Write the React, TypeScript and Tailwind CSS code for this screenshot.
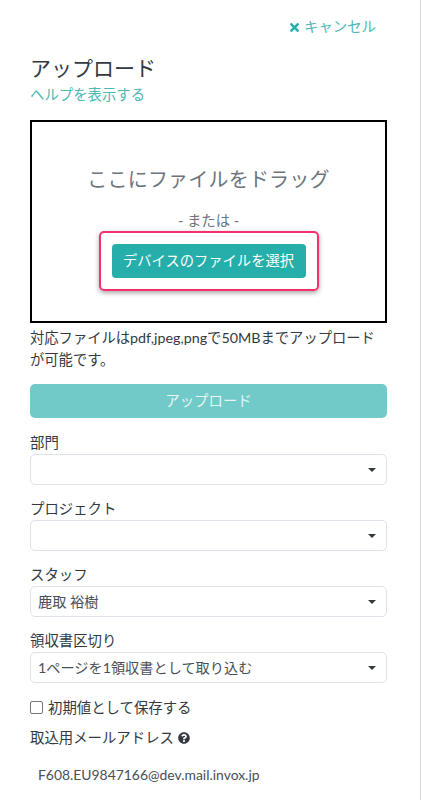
import React from "react";
import { FaTimes, FaQuestionCircle } from "react-icons/fa";

function SelectField({ label, value, className }: { label: string; value?: string; className: string }) {
  return (
    <div className={className}>
      <div className="text-[14.4px] leading-[21px] text-[#33393f]">{label}</div>
      <div className="mt-[1px] flex h-[31px] items-center justify-between rounded-[5px] border border-[#dde3e8] bg-white pl-[7px] pr-[10px] text-[14.2px] text-[#495057]">
        <span>{value}</span>
        <span className="h-0 w-0 border-x-[4px] border-t-[4px] border-x-transparent border-t-[#343a40]" />
      </div>
    </div>
  );
}

export default function App() {
  const font = { fontFamily: 'Lato, "Noto Sans CJK JP", sans-serif' };
  return (
    <div style={font} className="h-[800px] w-[422px] overflow-hidden bg-white">
      <div className="h-full w-[421px] border-r border-[#d9d9d9] pl-[30px] pr-[34px]">
        {/* Header */}
        <div className="flex h-[54px] items-start justify-end pr-[10px] pt-[17px] text-[14.4px] leading-[20px] text-[#4db8b4]">
          <span className="flex items-center gap-[4px]">
            <FaTimes className="h-[13px] w-[11px] text-[#26aeaa]" />
            キャンセル
          </span>
        </div>
        <h1 className="text-[21px] leading-[28px] text-[#33393f]">アップロード</h1>
        <div className="mt-[2px] text-[14.4px] leading-[21px] text-[#4db8b4]">ヘルプを表示する</div>

        {/* Drop area */}
        <div className="mt-[15px] flex h-[203px] w-[357px] flex-col items-center border-2 border-black">
          <div className="mt-[42px] text-[20px] leading-[30px] tracking-[0.2px] text-[#6c757d]">ここにファイルをドラッグ</div>
          <div className="mt-[17px] text-[14.4px] leading-[20px] text-[#6c757d]">- または -</div>
          <div className="rounded-[5px] border-[2px] border-[#f5306c] px-[11px] py-[11px] shadow-[0_2px_5px_rgba(0,0,0,0.35)]">
            <div className="flex h-[34px] w-[194px] items-center justify-center rounded-[4px] bg-[#26aeaa] text-[14.3px] text-white">
              デバイスのファイルを選択
            </div>
          </div>
        </div>

        <p className="mt-[4px] w-[357px] text-[14.3px] leading-[22px] text-[#33393f]">
          対応ファイルはpdf,jpeg,pngで50MBまでアップロードが可能です。
        </p>

        <div className="mt-[13px] flex h-[34px] w-[357px] items-center justify-center rounded-[5px] bg-[#72cac8] text-[14.4px] text-[#e6f6f5]">
          アップロード
        </div>

        <div className="w-[357px]">
          <SelectField label="部門" className="mt-[14px]" />
          <SelectField label="プロジェクト" className="mt-[13px]" />
          <SelectField label="スタッフ" value="鹿取 裕樹" className="mt-[13px]" />
          <SelectField label="領収書区切り" value="1ページを1領収書として取り込む" className="mt-[13px]" />

          <label className="mt-[14px] flex items-center gap-[5px] text-[14.4px] leading-[21px] text-[#33393f]">
            <span className="h-[13px] w-[13px] rounded-[2px] border border-[#767676] bg-white" />
            初期値として保存する
          </label>

          <div className="mt-[9px] flex items-center gap-[4px] text-[14.4px] leading-[21px] text-[#33393f]">
            取込用メールアドレス
            <FaQuestionCircle className="h-[12px] w-[12px] text-[#33393f]" />
          </div>
          <div className="mt-[16px] pl-2 text-[13.9px] leading-[21px] text-[#495057]">F608.EU9847166@dev.mail.invox.jp</div>
        </div>
      </div>
    </div>
  );
}
